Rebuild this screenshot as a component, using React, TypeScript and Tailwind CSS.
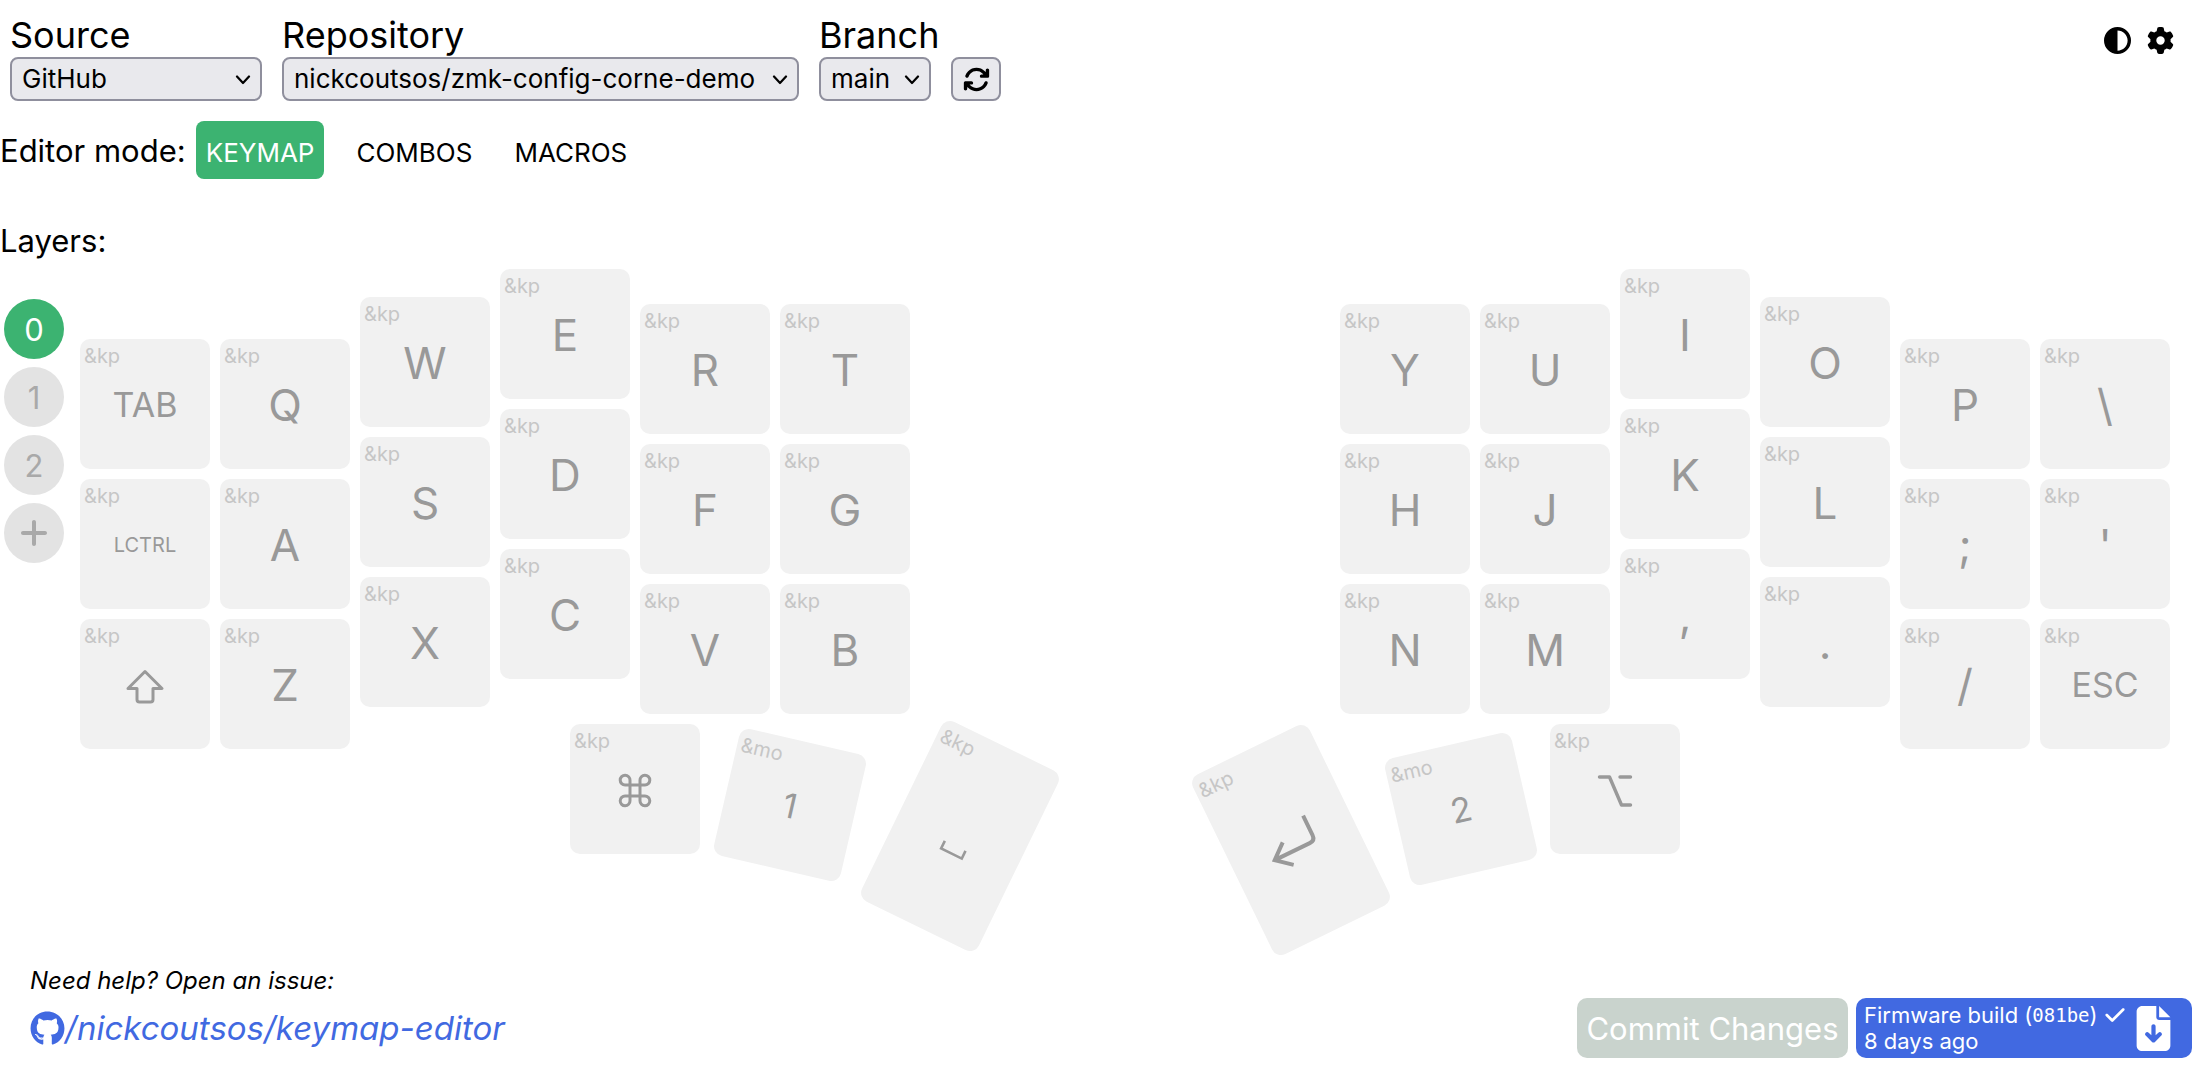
import { useState, type ReactNode } from 'react';
import { FaArrowsRotate, FaCheck, FaCircleHalfStroke, FaFileArrowDown, FaGear, FaGithub, FaPlus } from 'react-icons/fa6';

function Glyph({ children, width }: { children: ReactNode; width: number }) {
  return (
    <svg
      viewBox="-32 -32 64 64"
      className="size-16"
      fill="none"
      stroke="currentColor"
      strokeWidth={width}
      aria-hidden="true"
    >
      {children}
    </svg>
  );
}

const shiftGlyph = (
  <Glyph width={3}>
    <path
      strokeLinejoin="round"
      d="M0 -13.5 L17 3.5 H8 V14.5 Q8 17 5.5 17 H-5.5 Q-8 17 -8 14.5 V3.5 H-17 Z"
    />
  </Glyph>
);

const commandGlyph = (
  <Glyph width={3}>
    <path d="M-5 -9.8 A4.9 4.9 0 1 0 -9.8 -5 H9.8 A4.9 4.9 0 1 0 5 -9.8 V10.8 A4.9 4.9 0 1 0 9.8 6 H-9.8 A4.9 4.9 0 1 0 -5 10.8 Z" />
  </Glyph>
);

const optionGlyph = (
  <Glyph width={3.4}>
    <path strokeLinecap="round" strokeLinejoin="round" d="M-15.5 -13 H-5.5 L6.5 15 H15.5 M5 -13 H15.5" />
  </Glyph>
);

const returnGlyph = (
  <Glyph width={4}>
    <path d="M21.5 -17.5 V4 Q21.5 10 15.5 10 H-24 M-8.5 -2.5 L-23.5 10 L-8.5 22.5" />
  </Glyph>
);

const spaceGlyph = (
  <Glyph width={2.6}>
    <path d="M-11.5 10 V18.5 H11.5 V10" />
  </Glyph>
);

type KeyProps = { label: ReactNode; name?: string; behavior?: string; className?: string };

function Key({ label, name, behavior = '&kp', className = 'h-[130px]' }: KeyProps) {
  let size = 'text-[44px]';
  if (behavior === '&mo') size = 'text-[34px]';
  else if (typeof label === 'string' && label.length > 3) size = 'text-[20px]';
  else if (typeof label === 'string' && label.length > 1) size = 'text-[34px]';
  return (
    <button
      type="button"
      aria-label={name}
      className={`relative flex w-[130px] shrink-0 items-center justify-center rounded-[10px] bg-[#f1f1f1] pt-[2px] text-[#999999] ${className}`}
    >
      <span className="absolute left-[4px] top-[5px] text-[20px] leading-6 text-[#c6c6c6]">{behavior}</span>
      <span className={`leading-none ${size}`}>{label}</span>
    </button>
  );
}

type Column = { offset: string; keys: KeyProps[] };

const leftColumns: Column[] = [
  { offset: 'mt-[70px]', keys: [{ label: 'TAB' }, { label: 'LCTRL' }, { label: shiftGlyph, name: 'Shift' }] },
  { offset: 'mt-[70px]', keys: [{ label: 'Q' }, { label: 'A' }, { label: 'Z' }] },
  { offset: 'mt-[28px]', keys: [{ label: 'W' }, { label: 'S' }, { label: 'X' }] },
  { offset: 'mt-0', keys: [{ label: 'E' }, { label: 'D' }, { label: 'C' }] },
  { offset: 'mt-[35px]', keys: [{ label: 'R' }, { label: 'F' }, { label: 'V' }] },
  { offset: 'mt-[35px]', keys: [{ label: 'T' }, { label: 'G' }, { label: 'B' }] },
];

const rightColumns: Column[] = [
  { offset: 'mt-[35px]', keys: [{ label: 'Y' }, { label: 'H' }, { label: 'N' }] },
  { offset: 'mt-[35px]', keys: [{ label: 'U' }, { label: 'J' }, { label: 'M' }] },
  { offset: 'mt-0', keys: [{ label: 'I' }, { label: 'K' }, { label: ',' }] },
  { offset: 'mt-[28px]', keys: [{ label: 'O' }, { label: 'L' }, { label: '.' }] },
  { offset: 'mt-[70px]', keys: [{ label: 'P' }, { label: ';' }, { label: '/' }] },
  { offset: 'mt-[70px]', keys: [{ label: '\\' }, { label: "'" }, { label: 'ESC' }] },
];

function Columns({ columns, className = '' }: { columns: Column[]; className?: string }) {
  return (
    <div className={`flex items-start gap-[10px] ${className}`}>
      {columns.map((column, i) => (
        <div key={i} className={`flex flex-col gap-[10px] ${column.offset}`}>
          {column.keys.map((key, j) => (
            <Key key={j} {...key} />
          ))}
        </div>
      ))}
    </div>
  );
}

function Picker({ id, label, options, width }: { id: string; label: string; options: string[]; width: string }) {
  return (
    <div className={`flex flex-col items-start ${width}`}>
      <label htmlFor={id} className="whitespace-nowrap text-[36px] leading-[44px]">
        {label}
      </label>
      <div className="relative w-full">
        <select
          id={id}
          className="block h-[44px] w-full appearance-none rounded-[8px] border-2 border-[#8f8f9d] bg-[#e9e9ed] pl-[10px] text-[26px] leading-[40px]"
        >
          {options.map((option) => (
            <option key={option}>{option}</option>
          ))}
        </select>
        <svg
          viewBox="0 0 16 10"
          className="pointer-events-none absolute right-[11px] top-[18px] h-[10px] w-4"
          fill="none"
          stroke="currentColor"
          strokeWidth="2.2"
          strokeLinecap="round"
          strokeLinejoin="round"
          aria-hidden="true"
        >
          <path d="M2 1.5 L8 8 L14 1.5" />
        </svg>
      </div>
    </div>
  );
}

const modes = ['KEYMAP', 'COMBOS', 'MACROS'];

export default function App() {
  const [mode, setMode] = useState('KEYMAP');
  const [layer, setLayer] = useState(0);

  return (
    <div className="flex min-h-screen flex-col bg-white font-['Inter',sans-serif] text-black">
      <header className="flex items-end gap-5 pl-[10px] pr-[28px] pt-[13px]">
        <Picker id="source" label="Source" options={['GitHub']} width="w-[252px]" />
        <Picker id="repository" label="Repository" options={['nickcoutsos/zmk-config-corne-demo']} width="w-[517px]" />
        <Picker id="branch" label="Branch" options={['main']} width="w-[112px]" />
        <button
          type="button"
          aria-label="Refresh"
          className="flex h-[44px] w-[50px] items-center justify-center rounded-[8px] border-2 border-[#8f8f9d] bg-[#e9e9ed] text-[27px]"
        >
          <FaArrowsRotate />
        </button>
        <div className="ml-auto flex gap-4 self-start pt-[14px] text-[27px]">
          <button type="button" aria-label="Toggle theme">
            <FaCircleHalfStroke />
          </button>
          <button type="button" aria-label="Settings">
            <FaGear />
          </button>
        </div>
      </header>

      <nav className="mt-5 flex items-baseline">
        <span className="mr-[10px] text-[31px] leading-[38px]">Editor mode:</span>
        <div className="flex gap-[22px]">
          {modes.map((m) => (
            <button
              key={m}
              type="button"
              onClick={() => setMode(m)}
              className={`rounded-[8px] px-[10px] pb-[9px] pt-[15px] text-[26px] leading-[34px] ${
                m === mode ? 'bg-[#3cb371] text-white' : ''
              }`}
            >
              {m}
            </button>
          ))}
        </div>
      </nav>

      <p className="mt-[43px] text-[31px] leading-[38px]">Layers:</p>

      <main className="mt-[9px] flex">
        <div className="flex w-16 shrink-0 flex-col gap-2 pl-1 pt-[30px]">
          {[0, 1, 2].map((n) => (
            <button
              key={n}
              type="button"
              onClick={() => setLayer(n)}
              className={`flex size-[60px] items-center justify-center rounded-full text-[31px] leading-none ${
                n === layer ? 'bg-[#3cb371] text-white' : 'bg-[#e3e3e3] text-[#a9a9a9]'
              }`}
            >
              {n}
            </button>
          ))}
          <button
            type="button"
            aria-label="Add layer"
            className="flex size-[60px] items-center justify-center rounded-full bg-[#e3e3e3] text-[32px] text-[#a9a9a9]"
          >
            <FaPlus />
          </button>
        </div>

        <div className="flex flex-1 justify-center gap-[201px] pr-4">
          <div className="flex flex-col">
            <Columns columns={leftColumns} />
            <div className="-mt-[25px] ml-[490px] flex items-start">
              <Key label={commandGlyph} name="Command" className="h-[130px]" />
              <Key label="1" behavior="&mo" className="ml-[25px] mt-4 h-[130px] rotate-[13deg]" />
              <Key label={spaceGlyph} name="Space" className="ml-10 mt-3 h-[200px] rotate-[26deg]" />
            </div>
          </div>
          <div className="flex flex-col">
            <Columns columns={rightColumns} className="ml-[114px]" />
            <div className="-mt-[25px] flex items-start">
              <Key label={returnGlyph} name="Return" className="mt-4 h-[200px] -rotate-[26deg]" />
              <Key label="2" behavior="&mo" className="ml-10 mt-5 h-[130px] -rotate-[13deg]" />
              <Key label={optionGlyph} name="Option" className="ml-6 h-[130px]" />
            </div>
          </div>
        </div>
      </main>

      <footer className="mt-auto flex items-end justify-between p-[10px]">
        <div className="pb-[10px] pl-5 italic">
          <p className="text-[24px] leading-[30px]">Need help? Open an issue:</p>
          <a
            href="https://github.com/nickcoutsos/keymap-editor"
            className="mt-3 flex items-center text-[33px] leading-10 text-[#4169e1]"
          >
            <FaGithub className="size-[35px]" />
            /nickcoutsos/keymap-editor
          </a>
        </div>
        <div className="flex gap-2">
          <button
            type="button"
            disabled
            className="h-[60px] w-[271px] rounded-[10px] bg-[#c9d3cd] pt-[2px] text-[31px] text-white"
          >
            Commit Changes
          </button>
          <button
            type="button"
            className="flex h-[60px] w-[336px] items-center justify-between rounded-[10px] bg-[#4169e1] pl-2 pr-4 text-left text-[22px] leading-[26px] text-white"
          >
            <span>
              <span className="flex items-center whitespace-nowrap">
                Firmware build (<code className="font-['DejaVu_Sans_Mono',monospace] text-[19px]">081be</code>)
                <FaCheck className="ml-[6px]" />
              </span>
              <span className="block">8 days ago</span>
            </span>
            <FaFileArrowDown className="size-[45px]" />
          </button>
        </div>
      </footer>
    </div>
  );
}
